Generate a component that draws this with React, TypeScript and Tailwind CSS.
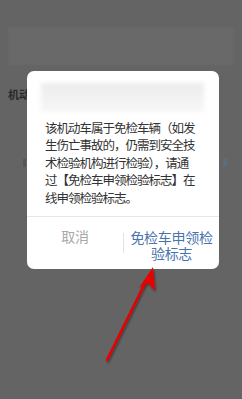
const lines = [
  "该机动车属于免检车辆（如发",
  "生伤亡事故的，仍需到安全技",
  "术检验机构进行检验），请通",
  "过【免检车申领检验标志】在",
  "线申领检验标志。",
];

export default function App() {
  return (
    <div
      className="relative w-[242px] h-[399px] overflow-hidden bg-[#646464]"
      style={{ fontFamily: '"Noto Sans CJK SC", "Noto Sans", sans-serif' }}
    >
      {/* dimmed page underneath */}
      <div className="pt-[27px]">
        <div className="mx-[8px] h-[38px] bg-[#696969] blur-[1px]" />
        <div className="mt-[22px] pl-[8px] text-[11px] font-bold text-[#2a2a2a] leading-[14px]">
          机动
        </div>
        <div className="mt-[58px] flex justify-between pl-[23px] pr-[15px]">
          <span className="block w-[3px] h-[8px] bg-[#575757]" />
          <span className="block w-[4px] h-[7px] bg-[#5b6c85]" />
        </div>
      </div>

      {/* dialog */}
      <div className="absolute left-[27px] top-[71px] w-[192px] rounded-[7px] bg-white">
        <div className="pt-[12px] pl-[14px] pr-[15px]">
          <div className="h-[29px] bg-gradient-to-b from-[#ececec] to-[#f7f7f7] blur-[2px]" />
        </div>
        <div className="pt-[7px] pb-[10px] pl-[18px] text-[12.5px] leading-[17.4px] tracking-[-1px] text-[#333]">
          {lines.map((l) => (
            <div key={l} className="whitespace-nowrap">
              {l}
            </div>
          ))}
        </div>
        <div className="h-px bg-[#e6e6e6]" />
        <div className="flex h-[52px]">
          <div className="w-[96px] flex justify-center pt-[12px] text-[14px] leading-[15px] tracking-[-0.3px] text-[#a8a8a8]">
            取消
          </div>
          <div className="my-[16px] w-px bg-[#e2e2e2]" />
          <div className="flex-1 pt-[13px] text-center text-[14px] leading-[15.5px] tracking-[-0.3px] text-[#4a73ad]">
            <div className="whitespace-nowrap">免检车申领检</div>
            <div>验标志</div>
          </div>
        </div>
      </div>

      {/* red arrow */}
      <svg className="absolute left-0 top-0" width="242" height="399" viewBox="0 0 242 399">
        <defs>
          <filter id="sh" x="-20%" y="-20%" width="140%" height="140%">
            <feDropShadow dx="1" dy="1.5" stdDeviation="1.2" floodColor="#000" floodOpacity="0.45" />
          </filter>
        </defs>
        <g filter="url(#sh)">
          <line x1="107" y1="360" x2="147" y2="279" stroke="#e60000" strokeWidth="2.6" strokeLinecap="round" />
          <polygon points="153,267 155,291 148,283 139,288" fill="#e60000" />
        </g>
      </svg>
    </div>
  );
}
